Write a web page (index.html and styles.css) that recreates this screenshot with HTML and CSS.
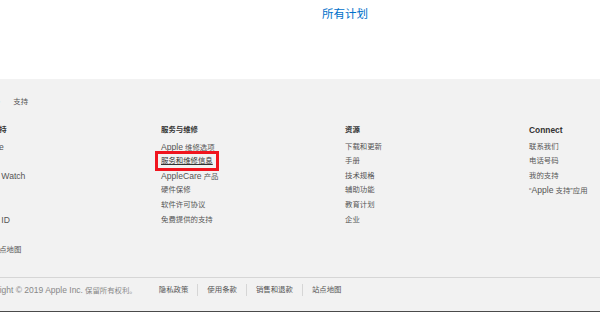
FILE: index.html
```html
<!DOCTYPE html>
<html lang="zh-CN">
<head>
  <meta charset="UTF-8" />
  <title>所有计划 - Apple 支持</title>
  <link rel="stylesheet" href="styles.css">
</head>
<body>
  <div class="plans">
    <a href="#">所有计划</a>
  </div>

  <footer class="site-footer">
    <div class="footer-inner">
      <nav class="breadcrumbs">
        <svg class="apple-logo" viewBox="0 0 14 17" width="9" height="11">
          <path d="M11.6 9c0-2 1.7-3 1.8-3.1-1-1.4-2.5-1.6-3-1.6-1.3-.1-2.5.8-3.2.8-.7 0-1.7-.8-2.8-.7C3 4.4 1.7 5.2 1 6.5c-1.5 2.6-.4 6.4 1.1 8.5.7 1 1.5 2.2 2.6 2.1 1 0 1.4-.7 2.7-.7 1.3 0 1.6.7 2.7.7 1.1 0 1.8-1 2.5-2.1.8-1.2 1.1-2.3 1.1-2.4 0 0-2.1-.8-2.1-3.6zM9.5 3c.6-.7 1-1.6.9-2.6-.8 0-1.8.6-2.4 1.3-.5.6-1 1.6-.9 2.5.9.1 1.8-.5 2.4-1.2z" fill="#999"/>
        </svg>
        <span class="chevron">›</span>
        <a href="#">支持</a>
      </nav>

      <div class="directory">
        <div class="column">
          <h3>产品支持</h3>
          <ul>
            <li><a href="#" class="en">iPhone</a></li>
            <li><a href="#" class="en">iPad</a></li>
            <li><a href="#" class="en">Apple Watch</a></li>
            <li><a href="#" class="en">Mac</a></li>
            <li><a href="#" class="en">iPod</a></li>
            <li><a href="#" class="en">Apple ID</a></li>
          </ul>
        </div>
        <div class="column">
          <h3>服务与维修</h3>
          <ul>
            <li><a href="#"><span class="en">Apple</span> 维修选项</a></li>
            <li><a href="#" class="highlight">服务和维修信息</a></li>
            <li><a href="#"><span class="en">AppleCare</span> 产品</a></li>
            <li><a href="#">硬件保修</a></li>
            <li><a href="#">软件许可协议</a></li>
            <li><a href="#">免费提供的支持</a></li>
          </ul>
        </div>
        <div class="column">
          <h3>资源</h3>
          <ul>
            <li><a href="#">下载和更新</a></li>
            <li><a href="#">手册</a></li>
            <li><a href="#">技术规格</a></li>
            <li><a href="#">辅助功能</a></li>
            <li><a href="#">教育计划</a></li>
            <li><a href="#">企业</a></li>
          </ul>
        </div>
        <div class="column">
          <h3 class="en">Connect</h3>
          <ul>
            <li><a href="#">联系我们</a></li>
            <li><a href="#">电话号码</a></li>
            <li><a href="#">我的支持</a></li>
            <li><a href="#">“<span class="en">Apple</span> 支持”应用</a></li>
          </ul>
        </div>
      </div>

      <div class="sitemap-link">
        <a href="#">支持站点地图</a>
      </div>

      <div class="legal">
        <span class="copyright"><span class="en">Copyright © 2019 Apple Inc.</span> 保留所有权利。</span>
        <ul class="legal-links">
          <li><a href="#">隐私政策</a></li>
          <li><a href="#">使用条款</a></li>
          <li><a href="#">销售和退款</a></li>
          <li><a href="#">站点地图</a></li>
        </ul>
      </div>
    </div>
  </footer>
</body>
</html>
```

FILE: styles.css
```css
html, body {
  margin: 0;
  padding: 0;
  overflow: hidden;
}

body {
  font-family: 'Liberation Sans', 'Noto Sans CJK SC', sans-serif;
  background: #fff;
  height: 312px;
  display: flex;
  flex-direction: column;
}

a {
  text-decoration: none;
  color: inherit;
}

ul {
  list-style: none;
  margin: 0;
  padding: 0;
}

.plans {
  height: 79px;
  text-align: center;
  padding-left: 90px;
  box-sizing: border-box;
}

.plans a {
  display: inline-block;
  margin-top: 6px;
  font-size: 11.5px;
  line-height: 16px;
  color: #0070c9;
}

.site-footer {
  flex: 1;
  background: #f2f2f2;
  border-bottom: 1px solid #4a4a4a;
  font-size: 7.4px;
  color: #555;
}

.en {
  font-size: 8.6px;
}

.footer-inner {
  margin-left: -23px;
  width: calc(100% + 23px);
  padding-top: 17px;
}

.breadcrumbs {
  display: flex;
  align-items: center;
  height: 12px;
  line-height: 12px;
  color: #555;
}

.apple-logo {
  margin-right: 11px;
}

.chevron {
  color: #aaa;
  font-size: 10px;
  margin-right: 13px;
}

.directory {
  display: grid;
  grid-template-columns: repeat(4, 184px);
  margin-top: 16px;
}

.column h3 {
  margin: 0 0 3.7px;
  font-size: 7.4px;
  font-weight: 600;
  line-height: 12px;
  color: #333;
}

.column h3.en {
  font-size: 8.4px;
}

.column li {
  line-height: 14.6px;
  height: 14.6px;
  color: #555;
}

.highlight {
  display: inline-block;
  line-height: 14px;
  padding: 0 3px;
  margin-left: -3px;
  text-decoration: underline;
  color: #333;
  outline: 3px solid #f0141e;
}

.sitemap-link {
  margin-top: 16.5px;
  line-height: 12px;
  color: #555;
}

.legal {
  margin-top: 21px;
  border-top: 1px solid #d6d6d6;
  padding-top: 6px;
  display: flex;
  align-items: center;
  line-height: 12px;
}

.copyright {
  color: #888;
  margin-right: 22px;
}

.copyright .en {
  font-size: 8.5px;
}

.legal-links {
  display: flex;
}

.legal-links li {
  color: #555;
}

.legal-links li + li {
  border-left: 1px solid #d6d6d6;
  margin-left: 9px;
  padding-left: 9px;
}
```
